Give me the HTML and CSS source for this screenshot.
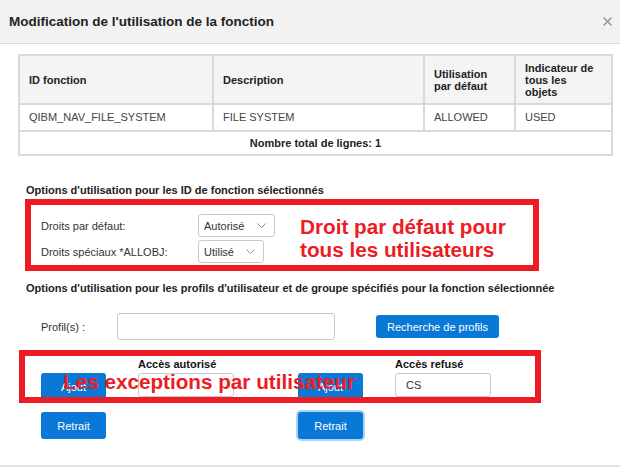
FILE: index.html
```html
<!DOCTYPE html>
<html lang="fr">
<head>
    <meta charset="UTF-8">
    <meta name="viewport" content="width=device-width, initial-scale=1.0">
    <title>Modification de l'utilisation de la fonction</title>
    <link rel="stylesheet" href="styles.css">
</head>
<body>
    <div class="dialog">
        <div class="dialog-header">
            <h1 class="dialog-title">Modification de l'utilisation de la fonction</h1>
            <button class="close-button" aria-label="Fermer">
                <svg width="9" height="9" viewBox="0 0 9 9" fill="none" stroke="currentColor" stroke-width="1.2">
                    <path d="M0.5 0.5l8 8M8.5 0.5l-8 8"/>
                </svg>
            </button>
        </div>

        <div class="dialog-body">
            <table class="func-table">
                <colgroup>
                    <col class="col-id">
                    <col class="col-desc">
                    <col class="col-use">
                    <col class="col-all">
                </colgroup>
                <thead>
                    <tr class="row-head">
                        <th>ID fonction</th>
                        <th>Description</th>
                        <th>Utilisation par défaut</th>
                        <th>Indicateur de tous les objets</th>
                    </tr>
                </thead>
                <tbody>
                    <tr class="row-data">
                        <td>QIBM_NAV_FILE_SYSTEM</td>
                        <td>FILE SYSTEM</td>
                        <td>ALLOWED</td>
                        <td>USED</td>
                    </tr>
                    <tr class="row-total">
                        <td colspan="4">Nombre total de lignes: 1</td>
                    </tr>
                </tbody>
            </table>

            <h2 class="section-title">Options d'utilisation pour les ID de fonction sélectionnés</h2>
            <div class="rights-form">
                <label>Droits par défaut:</label>
                <span class="select select-wide">
                    <select>
                        <option>Autorisé</option>
                        <option>Refusé</option>
                    </select>
                    <svg class="chevron" width="9" height="5" viewBox="0 0 9 5" fill="none" stroke="currentColor" stroke-width="1">
                        <path d="M0.5 0.5l4 4 4-4"/>
                    </svg>
                </span>
                <label>Droits spéciaux *ALLOBJ:</label>
                <span class="select select-narrow">
                    <select>
                        <option>Utilisé</option>
                        <option>Non utilisé</option>
                    </select>
                    <svg class="chevron" width="9" height="5" viewBox="0 0 9 5" fill="none" stroke="currentColor" stroke-width="1">
                        <path d="M0.5 0.5l4 4 4-4"/>
                    </svg>
                </span>
            </div>

            <h2 class="section-title section-title-profiles">Options d'utilisation pour les profils d'utilisateur et de groupe spécifiés pour la fonction sélectionnée</h2>
            <div class="profile-row">
                <label class="profile-label">Profil(s) :</label>
                <input class="text-input" type="text">
                <button class="btn btn-search">Recherche de profils</button>
            </div>

            <div class="access-grid">
                <div class="access-col">
                    <h3 class="access-title">Accès autorisé</h3>
                    <div class="button-stack">
                        <button class="btn btn-tall">Ajout</button>
                        <button class="btn btn-tall">Retrait</button>
                    </div>
                    <div class="listbox"></div>
                </div>
                <div class="access-col">
                    <h3 class="access-title">Accès refusé</h3>
                    <div class="button-stack">
                        <button class="btn btn-tall">Ajout</button>
                        <button class="btn btn-tall is-focused">Retrait</button>
                    </div>
                    <div class="listbox">CS</div>
                </div>
            </div>
        </div>

        <div class="dialog-footer"></div>

        <!-- Annotations -->
        <div class="callout callout-defaults">
            <p class="callout-text">Droit par défaut pour<br>tous les utilisateurs</p>
        </div>
        <div class="callout callout-exceptions">
            <p class="callout-text">Les exceptions par utilisateur</p>
        </div>
    </div>
</body>
</html>
```

FILE: styles.css
```css
:root {
    --blue: #0a78d7;
    --red: #ed1c24;
    --border: #d9d9d9;
    --input-border: #c9c9c9;
    --text: #333333;
    --heading: #222222;
}

* {
    margin: 0;
    padding: 0;
    box-sizing: border-box;
}

body {
    font-family: "Liberation Sans", Arial, sans-serif;
    color: var(--text);
    background: #ffffff;
}

input,
select,
button {
    font: inherit;
    color: inherit;
}

/* Dialog */
.dialog {
    position: relative;
    width: 620px;
    height: 467px;
    overflow: hidden;
}

.dialog-header {
    height: 44px;
    display: flex;
    align-items: center;
    justify-content: space-between;
    padding: 0 8px 0 9px;
    background: #f2f2f2;
    border-bottom: 1px solid var(--border);
}

.dialog-title {
    font-size: 13.5px;
    font-weight: bold;
    color: var(--heading);
}

.close-button {
    display: flex;
    border: none;
    background: none;
    color: #8c8c8c;
    cursor: pointer;
}

.dialog-body {
    padding: 10px 9px 0 18px;
}

.dialog-footer {
    margin-top: 26px;
    border-top: 2px solid #e2e2e2;
}

/* Table */
.func-table {
    width: 593px;
    border-collapse: collapse;
    table-layout: fixed;
    font-size: 11px;
}

.col-id { width: 194px; }
.col-desc { width: 211px; }
.col-use { width: 91px; }
.col-all { width: 97px; }

.func-table th,
.func-table td {
    border: 2px solid var(--border);
    vertical-align: middle;
    text-align: left;
}

.func-table th {
    background: #f4f4f4;
    color: var(--heading);
    font-weight: bold;
    line-height: 12px;
    padding: 5px 12px 5px 9px;
}

.func-table td {
    color: #444444;
    line-height: 13px;
    padding: 5px 9px;
}

.row-head { height: 49px; }
.row-data { height: 27px; }
.row-total { height: 24px; }

.func-table .row-total td {
    padding: 4px 9px;
    text-align: center;
    font-weight: bold;
    color: var(--heading);
}

/* Options */
.section-title {
    margin: 27px 0 0 8px;
    font-size: 11px;
    font-weight: bold;
    line-height: 14px;
    color: var(--heading);
}

.section-title-profiles {
    margin-top: 18px;
}

.rights-form {
    display: grid;
    grid-template-columns: 157px auto;
    row-gap: 3px;
    align-items: center;
    justify-items: start;
    margin: 17px 0 0 23px;
    font-size: 11px;
}

.select {
    position: relative;
    display: inline-block;
}

.select select {
    appearance: none;
    height: 23px;
    padding: 0 20px 0 5px;
    border: 1px solid var(--input-border);
    border-radius: 3px;
    background: #ffffff;
    font-size: 11px;
}

.select-wide select { width: 77px; }
.select-narrow select { width: 66px; }

.chevron {
    position: absolute;
    right: 9px;
    top: 9px;
    color: #8a8a8a;
    pointer-events: none;
}

.profile-row {
    display: flex;
    align-items: center;
    height: 27px;
    margin: 18px 0 0 23px;
    font-size: 11px;
}

.profile-label {
    width: 76px;
}

.text-input {
    width: 218px;
    height: 27px;
    border: 1px solid var(--input-border);
    border-radius: 3px;
}

/* Buttons */
.btn {
    border: none;
    border-radius: 3px;
    background: var(--blue);
    color: #ffffff;
    font-size: 11px;
    cursor: pointer;
}

.btn-search {
    width: 123px;
    height: 23px;
    margin-left: 41px;
}

.btn-tall {
    width: 65px;
    height: 27px;
}

.btn.is-focused {
    box-shadow: 0 0 0 2px #a9d4f6;
}

/* Access lists */
.access-grid {
    display: grid;
    grid-template-columns: 257px 257px;
    margin: 17px 0 0 23px;
    font-size: 11px;
}

.access-col {
    display: grid;
    grid-template-columns: 65px 96px;
    column-gap: 32px;
    row-gap: 2px;
    align-items: start;
}

.access-title {
    grid-column: 2;
    font-size: 11px;
    line-height: 14px;
    font-weight: bold;
    color: #111111;
    white-space: nowrap;
}

.button-stack {
    display: flex;
    flex-direction: column;
    gap: 12px;
}

.listbox {
    height: 24px;
    padding-left: 10px;
    border: 1px solid var(--input-border);
    border-radius: 3px;
    line-height: 22px;
}

/* Annotations */
.callout {
    position: absolute;
    border: 6px solid var(--red);
}

.callout-defaults {
    left: 25px;
    top: 199px;
    width: 514px;
    height: 72px;
    padding: 9.5px 0 0 269px;
}

.callout-exceptions {
    left: 19px;
    top: 350px;
    width: 522px;
    height: 53px;
    padding: 13.5px 0 0 38px;
}

.callout-text {
    font-size: 20.7px;
    line-height: 23px;
    font-weight: bold;
    color: var(--red);
    white-space: nowrap;
}
```
